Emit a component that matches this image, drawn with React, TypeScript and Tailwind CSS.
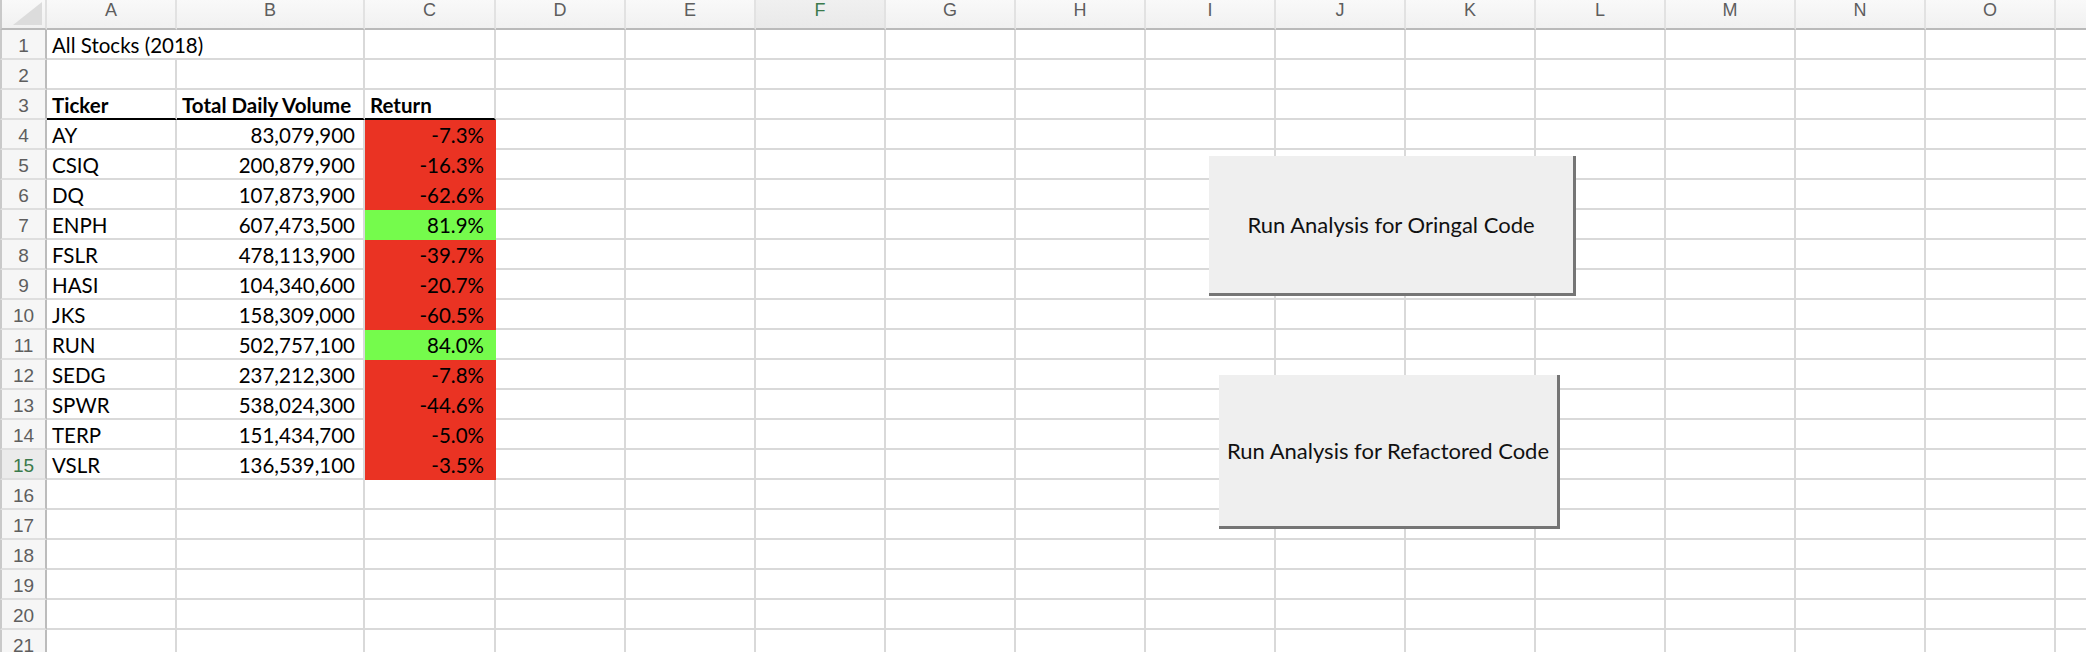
import React from "react";

// ---------------------------------------------------------------------------
// Data
// ---------------------------------------------------------------------------

const COLS = ["A", "B", "C", "D", "E", "F", "G", "H", "I", "J", "K", "L", "M", "N", "O", "P"];

const STOCKS = [
  { ticker: "AY", volume: "83,079,900", ret: "-7.3%" },
  { ticker: "CSIQ", volume: "200,879,900", ret: "-16.3%" },
  { ticker: "DQ", volume: "107,873,900", ret: "-62.6%" },
  { ticker: "ENPH", volume: "607,473,500", ret: "81.9%" },
  { ticker: "FSLR", volume: "478,113,900", ret: "-39.7%" },
  { ticker: "HASI", volume: "104,340,600", ret: "-20.7%" },
  { ticker: "JKS", volume: "158,309,000", ret: "-60.5%" },
  { ticker: "RUN", volume: "502,757,100", ret: "84.0%" },
  { ticker: "SEDG", volume: "237,212,300", ret: "-7.8%" },
  { ticker: "SPWR", volume: "538,024,300", ret: "-44.6%" },
  { ticker: "TERP", volume: "151,434,700", ret: "-5.0%" },
  { ticker: "VSLR", volume: "136,539,100", ret: "-3.5%" },
];

const ROWS = Array.from({ length: 21 }, (_, i) => i + 1);
const SELECTED_COL = "F";
const SELECTED_ROW = 15;

// ---------------------------------------------------------------------------
// Cells
// ---------------------------------------------------------------------------

function CornerCell() {
  return (
    <div className="relative border-l-2 border-l-[#c9c9c9] border-r-2 border-r-[#e0e0e0] border-b-2 border-b-[#bababa] bg-linear-to-b from-[#f9f9f9] to-[#f1f1f1]">
      <svg width="45" height="28" className="block">
        <polygon points="40,2 40,25 11,25" fill="#dcdcdc" />
      </svg>
    </div>
  );
}

function ColHeader({ letter }: { letter: string }) {
  const selected = letter === SELECTED_COL;
  return (
    <div
      className={
        "flex justify-center border-r-2 border-r-[#e2e2e2] border-b-2 border-b-[#bababa] font-['Liberation_Sans',sans-serif] text-[18px] leading-[20px] " +
        (selected
          ? "bg-linear-to-b from-[#f0f0f0] to-[#e9e9e9] text-[#3b7a4c]"
          : "bg-linear-to-b from-[#f9f9f9] to-[#f1f1f1] text-[#5e5e5e]")
      }
    >
      {letter === "P" ? "" : letter}
    </div>
  );
}

function RowHeader({ row }: { row: number }) {
  const selected = row === SELECTED_ROW;
  return (
    <div
      className={
        "flex items-center justify-center pt-[4px] border-l-2 border-l-[#c9c9c9] border-r-2 border-r-[#bcbcbc] border-b-2 border-b-[#dedede] font-['Liberation_Sans',sans-serif] text-[19px] " +
        (selected ? "bg-[#ebebeb] text-[#3b7a4c]" : "bg-[#f6f6f6] text-[#5e5e5e]")
      }
    >
      {row}
    </div>
  );
}

function Cell({ row, col }: { row: number; col: number }) {
  const stock = row >= 4 && row <= 15 ? STOCKS[row - 4] : null;
  let text = "";
  let align = "justify-start pl-[5px]";
  let bold = false;
  let fill = "";
  let border = "border-r-[#d9d9d9] border-b-[#d9d9d9]";

  if (row === 1 && col === 0) text = "All Stocks (2018)";
  if (row === 3 && col <= 2) {
    text = ["Ticker", "Total Daily Volume", "Return"][col];
    bold = true;
    border = "border-r-[#d9d9d9] border-b-black";
  }
  if (stock) {
    if (col === 0) text = stock.ticker;
    if (col === 1) {
      text = stock.volume;
      align = "justify-end pr-[8px]";
    }
    if (col === 2) {
      text = stock.ret;
      align = "justify-end pr-[10px]";
      const up = !stock.ret.startsWith("-");
      fill = up ? "bg-[#75fb4c]" : "bg-[#ea3323]";
      border = up ? "border-[#75fb4c]" : "border-[#ea3323]";
    }
  }

  return (
    <div
      className={
        "flex items-center pt-[3px] whitespace-nowrap border-r-2 border-b-2 font-[family-name:Lato,sans-serif] text-[20.5px] text-black " +
        `${align} ${border} ${fill} ` +
        (bold ? "font-bold " : "") +
        (row === 1 && col === 0 ? "col-span-2" : "")
      }
    >
      {text}
    </div>
  );
}

function MacroButton({ label, className }: { label: string; className: string }) {
  return (
    <button
      className={
        "absolute flex items-center justify-center bg-[#efefef] border-r-[3px] border-b-[3px] border-[#757575] font-[family-name:Lato,sans-serif] text-[22px] text-[#111] " +
        className
      }
    >
      {label}
    </button>
  );
}

// ---------------------------------------------------------------------------
// Page
// ---------------------------------------------------------------------------

export default function App() {
  return (
    <div className="relative w-[2086px] h-[652px] overflow-hidden bg-white">
      <div className="grid w-max grid-cols-[47px_130px_188px_131px_repeat(13,130px)] auto-rows-[30px]">
        <CornerCell />
        {COLS.map((c) => (
          <ColHeader key={c} letter={c} />
        ))}
        {ROWS.map((r) => (
          <React.Fragment key={r}>
            <RowHeader row={r} />
            {COLS.map((_, ci) =>
              r === 1 && ci === 1 ? null : <Cell key={ci} row={r} col={ci} />
            )}
          </React.Fragment>
        ))}
      </div>

      <MacroButton label="Run Analysis for Oringal Code" className="left-[1209px] top-[156px] w-[367px] h-[140px]" />
      <MacroButton label="Run Analysis for Refactored Code" className="left-[1219px] top-[375px] w-[341px] h-[154px]" />
    </div>
  );
}
